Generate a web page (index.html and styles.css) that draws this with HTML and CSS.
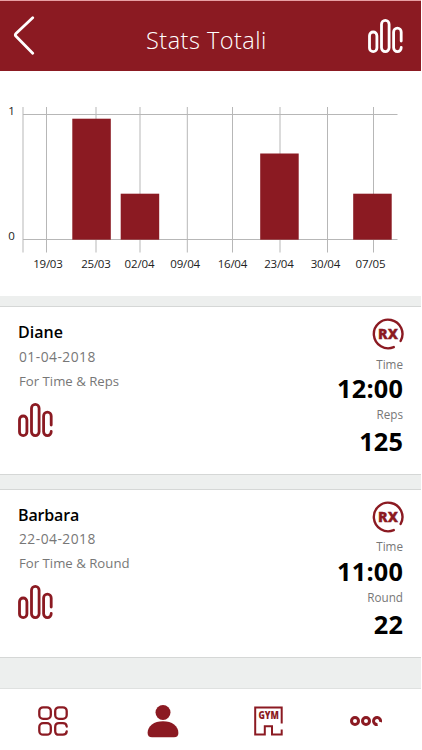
FILE: index.html
```html
<!DOCTYPE html>
<html lang="it">
<head>
<meta charset="utf-8">
<title>Stats Totali</title>
<link rel="stylesheet" href="styles.css">
</head>
<body>
<svg class="defs" width="0" height="0">
  <symbol id="bars" viewBox="0 0 35 34">
    <g fill="none" stroke="currentColor" stroke-width="2.8" stroke-linecap="round">
      <rect x="1.5" y="13" width="7.4" height="19.6" rx="3.7"/>
      <rect x="13.5" y="1.4" width="7.6" height="31.2" rx="3.8"/>
      <path d="M33.2 22V13a3.8 3.8 0 0 0-7.6 0V28.8a3.8 3.8 0 0 0 7.6 0V28.4"/>
    </g>
  </symbol>
</svg>
<div class="app">
  <header class="header">
    <svg class="back" viewBox="0 0 22 40"><path d="M19.7 1.7 3 17.6Q1.7 18.9 3 20.2L19.7 37.2" fill="none" stroke="currentColor" stroke-width="2.8" stroke-linecap="round"/></svg>
    <h1 class="title">Stats Totali</h1>
    <svg class="bars"><use href="#bars"/></svg>
  </header>
  <section class="chart">
    <svg width="421" height="225" viewBox="0 71 421 225">
      <path class="grid" d="M23 107V252.5M46.5 107V252.5M96 107V252.5M140 107V252.5M187.3 107V252.5M232.5 107V252.5M280 107V252.5M327.5 107V252.5M373.5 107V252.5M23 114.5H397.5M23 239.5H397.5"/>
      <g class="bar">
        <rect x="72.3" y="118.7" width="38.5" height="121"/>
        <rect x="120.7" y="193.7" width="38.5" height="46"/>
        <rect x="260.2" y="153.5" width="38.5" height="86.2"/>
        <rect x="353.2" y="193.7" width="38.5" height="46"/>
      </g>
      <g class="axis">
        <text x="11.5" y="115">1</text><text x="11.5" y="240">0</text>
        <text x="48" y="268" textLength="29.5">19/03</text>
        <text x="96" y="268" textLength="29.5">25/03</text>
        <text x="139.5" y="268" textLength="30">02/04</text>
        <text x="185.2" y="268" textLength="30">09/04</text>
        <text x="232.5" y="268" textLength="29.5">16/04</text>
        <text x="279" y="268" textLength="29.5">23/04</text>
        <text x="325.5" y="268" textLength="29.5">30/04</text>
        <text x="370.5" y="268" textLength="30">07/05</text>
      </g>
    </svg>
  </section>
  <article class="card">
    <div class="info">
      <h2 class="name">Diane</h2>
      <p class="date">01-04-2018</p>
      <p class="kind">For Time &amp; Reps</p>
      <svg class="bars"><use href="#bars"/></svg>
    </div>
    <div class="result">
      <svg class="rx" viewBox="0 0 32 32"><path d="M21.8 29.1A14.3 14.3 0 1 1 28.6 23"/><text x="16.1" y="20.8" text-anchor="middle" textLength="20" lengthAdjust="spacingAndGlyphs">RX</text></svg>
      <span class="label">Time</span>
      <strong class="value">12:00</strong>
      <span class="label lower">Reps</span>
      <strong class="value last">125</strong>
    </div>
  </article>
  <article class="card">
    <div class="info">
      <h2 class="name barbara">Barbara</h2>
      <p class="date">22-04-2018</p>
      <p class="kind">For Time &amp; Round</p>
      <svg class="bars"><use href="#bars"/></svg>
    </div>
    <div class="result">
      <svg class="rx" viewBox="0 0 32 32"><path d="M21.8 29.1A14.3 14.3 0 1 1 28.6 23"/><text x="16.1" y="20.8" text-anchor="middle" textLength="20" lengthAdjust="spacingAndGlyphs">RX</text></svg>
      <span class="label">Time</span>
      <strong class="value">11:00</strong>
      <span class="label lower">Round</span>
      <strong class="value last">22</strong>
    </div>
  </article>
  <nav class="tabs">
    <svg viewBox="0 0 32 32"><g fill="none" stroke="currentColor" stroke-width="2.3" stroke-linecap="round"><rect x="2.3" y="2.3" width="11.5" height="11.5" rx="3.8"/><rect x="18.2" y="2.3" width="11.5" height="11.5" rx="3.8"/><rect x="2.3" y="18.2" width="11.5" height="11.5" rx="3.8"/><path d="M29.7 21.5Q29.4 18.2 25.9 18.2H22Q18.2 18.2 18.2 22V25.9Q18.2 29.7 22 29.7H25.9Q29.4 29.7 29.7 26.4"/></g></svg>
    <svg viewBox="0 0 32 34"><circle cx="16" cy="8.5" r="7.5"/><path d="M.6 29C.6 22 7 17.3 16 17.3S31.4 22 31.4 29Q31.4 33.2 27 33.2H5Q.6 33.2 .6 29Z"/></svg>
    <svg viewBox="0 0 32 32"><path d="M29.7 18.5V2.5H3.2V29.5H12.8V21.2H20V29.5H29.7V24.5" fill="none" stroke="currentColor" stroke-width="2"/><text class="gym" x="16.7" y="14" text-anchor="middle" textLength="20.5" lengthAdjust="spacingAndGlyphs">GYM</text></svg>
    <svg viewBox="0 0 32 12"><g fill="none" stroke="currentColor" stroke-width="3"><circle cx="5" cy="6" r="3.5"/><circle cx="16" cy="6" r="3.5"/><path d="M27.6 9.5A3.5 3.5 0 1 1 30.4 7"/></g></svg>
  </nav>
</div>
</body>
</html>
```
FILE: styles.css
```css
* { box-sizing: border-box; }
body { margin: 0; background: #fff; font-family: "Open Sans", "Noto Sans", sans-serif; }
h1, h2, p { margin: 0; font-weight: 400; }
svg { display: block; flex: none; }
.defs { position: absolute; }
.app { width: 421px; height: 750px; background: #edefee; display: flex; flex-direction: column; }

.header { height: 71px; flex: none; border-top: 1px solid #e79fa4; background: #8b1a22; color: #fff; display: flex; padding: 0 18px 0 13px; }
.back { width: 22px; height: 40px; margin-top: 15px; }
.title { font-size: 23.5px; font-weight: 300; line-height: 32px; margin: 23px auto 0 111px; letter-spacing: .48px; white-space: nowrap; }
.bars { width: 35px; height: 34px; }
.header .bars { margin-top: 18px; }

.chart { height: 225px; flex: none; background: #fff; margin-bottom: 10px; }
.grid { fill: none; stroke: #b7b7b7; stroke-width: 1; }
.bar { fill: #8b1a22; }
.axis { font-size: 11.5px; fill: #222; text-anchor: middle; }

.card { height: 169px; flex: none; background: #fff; border: solid #d5d7d6; border-width: 1px 0; margin-bottom: 13.5px; padding: 0 18px; display: flex; justify-content: space-between; color: #777; }
.info { display: flex; flex-direction: column; padding-top: 13px; }
.name { font-size: 16px; font-weight: 600; line-height: 24px; color: #000; }
.barbara { letter-spacing: -.15px; }
.date { font-size: 13.8px; line-height: 24px; letter-spacing: .48px; padding-left: 1px; margin-top: .7px; }
.kind { font-size: 13.2px; line-height: 24px; padding-left: 1px; margin-bottom: 10.3px; }
.info .bars { color: #8b1a22; }
.result { display: flex; flex-direction: column; align-items: flex-end; padding-top: 11px; }
.rx { width: 32px; height: 32px; margin-right: -.5px; color: #8b1a22; }
.rx path { fill: none; stroke: currentColor; stroke-width: 2.4; stroke-linecap: round; }
.rx text { font: 800 14px "Open Sans", sans-serif; fill: currentColor; stroke: currentColor; stroke-width: .3; }
.label { font-size: 11.7px; line-height: 16px; margin-top: 5.5px; }
.value { font-size: 25.3px; font-weight: 700; line-height: 30px; letter-spacing: .2px; margin-right: -.2px; margin-top: 1.5px; color: #000; }
.lower { margin-top: 3px; }
.last { margin-top: 4px; }

.tabs { height: 62px; margin-top: auto; flex: none; background: #fff; border-top: 1px solid #dfe1e0; color: #8b1a22; fill: currentColor; display: grid; grid-template-columns: 109.5px 105.5px 98px 32px; align-items: center; padding: 2px 0 0 37px; }
.tabs svg { width: 32px; height: 34px; }
.gym { font: 800 10px "Open Sans", sans-serif; }
```
